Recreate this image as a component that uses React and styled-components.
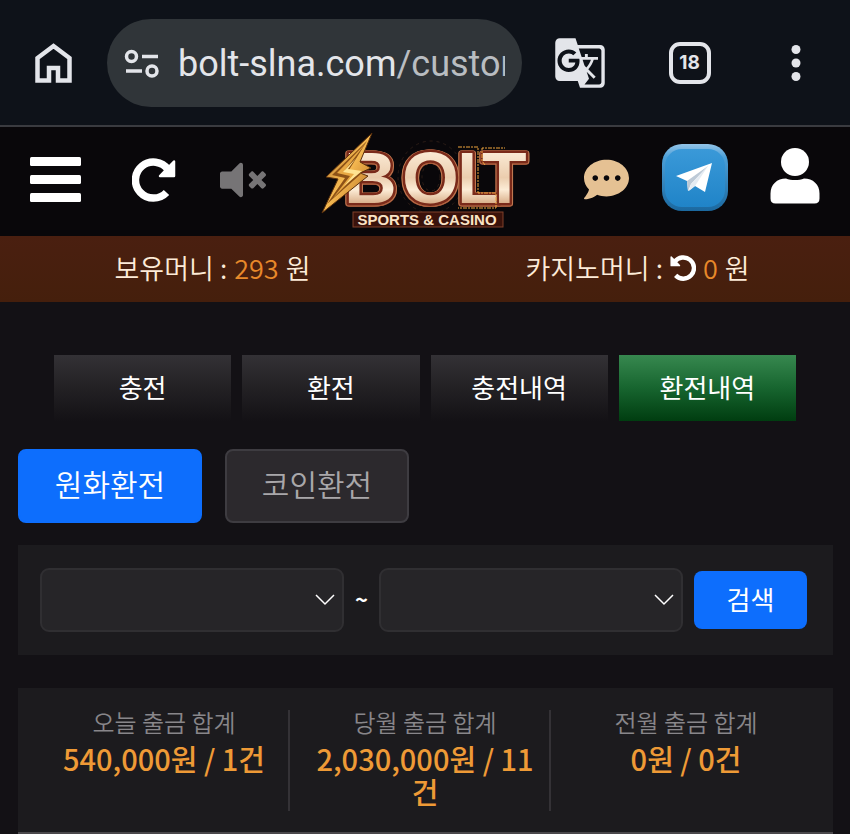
import React from 'react';
import styled, { createGlobalStyle } from 'styled-components';
import { FaCommentDots, FaVolumeMute } from 'react-icons/fa';
import { MdGTranslate } from 'react-icons/md';

const GlobalStyle = createGlobalStyle`
  *, *::before, *::after {
    box-sizing: border-box;
  }
  body {
    margin: 0;
    background: #131115;
    color: #fff;
    font-family: "Noto Sans CJK KR", "Noto Sans", sans-serif;
    font-weight: 350;
  }
  button, select {
    margin: 0;
    padding: 0;
    border: 0;
    font: inherit;
    color: inherit;
  }
  svg {
    display: block;
  }
`;

const S = {
  Page: styled.div`
    overflow: hidden;
  `,
  BrowserBar: styled.header`
    height: 127px;
    padding: 0 30px 0 32px;
    border-bottom: 2px solid #3a3b40;
    background: #0e1219;
    color: #e3e5ea;
    display: flex;
    align-items: center;
  `,
  AddressBar: styled.div`
    flex: 1;
    min-width: 0;
    height: 88px;
    margin: 0 31px 0 32px;
    padding: 2px 17px 0;
    border-radius: 44px;
    background: #303539;
    display: flex;
    align-items: center;
    gap: 17px;
  `,
  Url: styled.div`
    flex: 1;
    min-width: 0;
    overflow: hidden;
    white-space: nowrap;
    font-family: Roboto, sans-serif;
    font-size: 36px;
    font-weight: 400;
    line-height: 44px;
  `,
  UrlPath: styled.span`
    color: #b9bdc1;
  `,
  BrowserActions: styled.div`
    width: 267px;
    display: flex;
    align-items: center;
    justify-content: space-between;
  `,
  TabCount: styled.button`
    width: 42px;
    height: 42px;
    border: 4px solid #e3e5ea;
    border-radius: 11px;
    background: none;
    font-family: Inter, sans-serif;
    font-size: 19px;
    font-weight: 700;
    line-height: 24px;
  `,
  IconButton: styled.button`
    background: none;
    color: ${({ $color }) => $color || 'inherit'};
    display: flex;
    flex: none;
  `,
  SiteHeader: styled.header`
    height: 109px;
    padding: 0 30px 4px;
    background: #09070a;
    display: grid;
    grid-template-columns: 1fr 210px 1fr;
    align-items: center;
    column-gap: 54px;
  `,
  IconGroup: styled.div`
    display: grid;
    grid-template-columns: ${({ $columns }) => $columns};
    align-items: center;
  `,
  LogoLink: styled.a`
    display: block;
  `,
  MoneyBar: styled.div`
    height: 66px;
    background: linear-gradient(#4a1f10, #451f0c);
    color: #fdebd8;
    display: grid;
    grid-template-columns: 1fr 1fr;
  `,
  Money: styled.div`
    padding-bottom: 2px;
    font-size: 27px;
    line-height: 40px;
    display: flex;
    align-items: center;
    justify-content: center;
    gap: 7px;
  `,
  MoneyValue: styled.span`
    color: #e8892a;
  `,
  Main: styled.main`
    padding: 53px 17px 0 18px;
  `,
  Tabs: styled.nav`
    margin: 0 37px 0 36px;
    display: grid;
    grid-template-columns: repeat(4, 1fr);
    gap: 11px;
  `,
  Tab: styled.button`
    height: 66px;
    padding-bottom: 2px;
    background: ${({ $active }) => ($active
    ? 'linear-gradient(#37884f, #17652f 50%, #003d10)'
    : 'linear-gradient(#333135, #232124 50%, #131115)')};
    font-size: 26px;
    font-weight: 400;
    line-height: 38px;
  `,
  TypeButtons: styled.div`
    margin-top: 28px;
    display: flex;
    gap: 23px;
  `,
  TypeButton: styled.button`
    width: 184px;
    height: 74px;
    padding-bottom: 6px;
    border: 2px solid ${({ $active }) => ($active ? '#0d6efd' : '#3e3c41')};
    border-radius: 8px;
    background: ${({ $active }) => ($active ? '#0d6efd' : '#2c292d')};
    color: ${({ $active }) => ($active ? '#fff' : '#a9a7aa')};
    font-size: 30px;
    line-height: 44px;
  `,
  SearchForm: styled.form`
    height: 110px;
    margin-top: 22px;
    padding: 0 26px 0 22px;
    background: #1c1b1e;
    display: flex;
    align-items: center;
  `,
  SelectBox: styled.label`
    flex: 1;
    min-width: 0;
    display: grid;
    align-items: center;

    > * {
      grid-area: 1 / 1;
    }
    > svg {
      justify-self: end;
      margin-right: 9px;
      pointer-events: none;
    }
  `,
  Select: styled.select`
    appearance: none;
    width: 100%;
    height: 64px;
    padding: 0 44px 0 16px;
    border: 2px solid #302f32;
    border-radius: 9px;
    background: #262528;
    font-size: 26px;
  `,
  Tilde: styled.span`
    width: 35px;
    padding-bottom: 4px;
    font-size: 22px;
    font-weight: 700;
    line-height: 32px;
    text-align: center;
  `,
  SearchButton: styled.button`
    width: 113px;
    height: 58px;
    margin-left: 11px;
    padding-bottom: 2px;
    border-radius: 8px;
    background: #0d6efd;
    font-size: 26px;
    font-weight: 400;
    line-height: 38px;
  `,
  Summary: styled.section`
    margin-top: 33px;
    padding: 22px 21px 21px 11px;
    border-bottom: 2px solid #4a484b;
    background: #1c1b1e;
    display: grid;
    grid-template-columns: repeat(3, 1fr);
  `,
  SummaryItem: styled.dl`
    margin: 0;
    height: 101px;
    padding: 0 9px 0 20px;
    border-right: 2px solid #343236;
    text-align: center;

    &:last-child {
      border-right-color: transparent;
    }
  `,
  SummaryLabel: styled.dt`
    color: #88868a;
    font-size: 24px;
    line-height: 24px;
    margin-bottom: 8px;
  `,
  SummaryValue: styled.dd`
    margin: 0;
    color: #ee9a36;
    font-size: 29px;
    font-weight: 500;
    line-height: 33px;
  `,
};

const HomeIcon = () => (
  <svg width="43" height="44" viewBox="0 0 43 44" fill="none" stroke="currentColor" strokeWidth="4.5">
    <path d="M5.500 39.500V17L21.500 5l16 12v22.500H26V27h-9v12.500Z" />
  </svg>
);

const SiteSettingsIcon = () => (
  <svg width="37" height="30" viewBox="0 0 37 30" fill="none" stroke="currentColor" strokeWidth="3.5">
    <circle cx="7.500" cy="7.500" r="5" />
    <circle cx="28" cy="22" r="5" />
    <path d="M18 7.500h16M2 22h16" />
  </svg>
);

const MoreIcon = () => (
  <svg width="48" height="38" viewBox="0 0 48 38" fill="currentColor">
    <circle cx="24" cy="5.500" r="4.500" />
    <circle cx="24" cy="19" r="4.500" />
    <circle cx="24" cy="32.500" r="4.500" />
  </svg>
);

const MenuIcon = () => (
  <svg width="51" height="46" viewBox="0 0 51 46" fill="#fff">
    <rect width="51" height="9" rx="1.500" />
    <rect y="18" width="51" height="9" rx="1.500" />
    <rect y="36" width="51" height="9" rx="1.500" />
  </svg>
);

const ReloadIcon = ({ size, mirrored }) => (
  <svg width={size} height={size} viewBox="0 0 44 44">
    <g transform={mirrored ? 'translate(44 0) scale(-1 1)' : undefined}>
      <path d="M36 11.500A18 18 0 1 0 34.500 34.500" fill="none" stroke="#fff" strokeWidth="7.500" />
      <path
        d="M42 3.500V18H28Z"
        fill="#fff"
        stroke="#fff"
        strokeWidth="2.500"
        strokeLinejoin="round"
      />
    </g>
  </svg>
);

const UserIcon = () => (
  <svg width="50" height="66" viewBox="0 0 50 66" fill="#fff">
    <circle cx="25" cy="15" r="14" />
    <path d="M16 31.500c5 2 13 2 18 0 9 0 15.500 6 15.500 15v5q0 5-5 5h-39q-5 0-5-5v-5c0-9 6.500-15 15.500-15Z" />
  </svg>
);

const TelegramIcon = () => (
  <svg width="67" height="72" viewBox="0 0 67 72">
    <defs>
      <linearGradient id="tgEdge" x1="0" y1="0" x2="0" y2="1">
        <stop offset="0" stopColor="#93c4e8" />
        <stop offset="0.2" stopColor="#4b9fd8" />
        <stop offset="1" stopColor="#1b689f" />
      </linearGradient>
      <linearGradient id="tgFace" x1="0" y1="0" x2="0" y2="1">
        <stop offset="0" stopColor="#3a99d8" />
        <stop offset="1" stopColor="#2084c8" />
      </linearGradient>
    </defs>
    <rect width="66" height="67" rx="20" fill="url(#tgEdge)" />
    <rect x="3" y="5" width="60" height="58" rx="17" fill="url(#tgFace)" />
    <path d="M14 32 50 19 43 48 33 42 26 47 25 37Z" fill="#fff" />
    <path d="M25 37 46 22 29 40 26 47Z" fill="#bcc9d6" />
    <path d="M29 40 46 22 33 42 27 47Z" fill="#e4ebf2" />
  </svg>
);

const ChevronIcon = () => (
  <svg width="20" height="12" viewBox="0 0 20 12" fill="none" stroke="#fff" strokeWidth="1.500">
    <path d="m1 1 9 9 9-9" />
  </svg>
);

const LogoLetters = styled.text`
  font: 700 73px "Liberation Sans", sans-serif;
  paint-order: stroke;
  stroke: #7a2a1a;
  stroke-width: 5px;
  stroke-linejoin: round;
  filter: drop-shadow(1px 0 0 #c27a52) drop-shadow(-1px 0 0 #c27a52)
    drop-shadow(0 1px 0 #a85a3a);
`;

const Logo = () => (
  <svg width="210" height="98" viewBox="0 0 210 98" role="img" aria-label="BOLT Sports & Casino">
    <defs>
      <linearGradient id="letters" x1="0" y1="0" x2="0" y2="1">
        <stop offset="0.1" stopColor="#fff2df" />
        <stop offset="0.5" stopColor="#ebcdae" />
        <stop offset="0.65" stopColor="#fcecd6" />
        <stop offset="0.85" stopColor="#d3a47c" />
      </linearGradient>
      <linearGradient id="gold" x1="0" y1="0" x2="1" y2="1">
        <stop offset="0" stopColor="#9a5d1c" />
        <stop offset="0.5" stopColor="#f5b951" />
        <stop offset="1" stopColor="#a65c15" />
      </linearGradient>
    </defs>
    <g fill="none" stroke="#2c1d17" strokeDasharray="3 4">
      <ellipse cx="111" cy="46" rx="33" ry="36" />
      <ellipse cx="111" cy="46" rx="9" ry="14" />
    </g>
    <LogoLetters x="24 82 137 162" y="72" fill="url(#letters)">BOLT</LogoLetters>
    <path
      d="M138 16h20v46h18v15h-38M165 34l-3-4V17h23"
      fill="none"
      stroke="#efa53c"
      strokeWidth="1"
      strokeDasharray="4 1 2 1"
    />
    <path d="M52 2 6 46l12 2L2 82l46-37-8-3 11-5-11-6Z" fill="url(#gold)" stroke="#5a2f0c" strokeWidth="1" />
    <path d="M47 10 12 44l13 3L7 73l35-31-13-3Z" fill="#8d5217" />
    <path d="M46 12 17 42l13 3-17 22 25-25-13-3Z" fill="#e8a843" />
    <path d="M36 27 23 41l11 2-10 12 18-15-14-2Z" fill="#ffe391" />
    <rect x="33" y="81" width="150" height="15" fill="#3a120b" stroke="#80402a" />
    <text
      x="107"
      y="94"
      fill="#fae3c5"
      textAnchor="middle"
      fontFamily="Liberation Sans, sans-serif"
      fontSize="15"
      fontWeight="700"
    >
      SPORTS &amp; CASINO
    </text>
  </svg>
);

const tabs = ['충전', '환전', '충전내역', '환전내역'];
const types = ['원화환전', '코인환전'];
const totals = [
  { label: '오늘 출금 합계', value: '540,000원 / 1건' },
  { label: '당월 출금 합계', value: '2,030,000원 / 11건' },
  { label: '전월 출금 합계', value: '0원 / 0건' },
];

const DateSelect = ({ label }) => (
  <S.SelectBox>
    <S.Select aria-label={label} defaultValue="">
      <option value="" aria-label="-" />
    </S.Select>
    <ChevronIcon />
  </S.SelectBox>
);

const App = () => (
  <S.Page>
    <GlobalStyle />
    <S.BrowserBar>
      <S.IconButton aria-label="Home"><HomeIcon /></S.IconButton>
      <S.AddressBar>
        <SiteSettingsIcon />
        <S.Url>
          bolt-slna.com
          <S.UrlPath>/custom</S.UrlPath>
        </S.Url>
      </S.AddressBar>
      <S.BrowserActions>
        <S.IconButton aria-label="Translate"><MdGTranslate size={54} /></S.IconButton>
        <S.TabCount>18</S.TabCount>
        <S.IconButton aria-label="More"><MoreIcon /></S.IconButton>
      </S.BrowserActions>
    </S.BrowserBar>
    <S.SiteHeader>
      <S.IconGroup $columns="103fr 88fr 46fr">
        <S.IconButton aria-label="메뉴"><MenuIcon /></S.IconButton>
        <S.IconButton aria-label="새로고침"><ReloadIcon size={44} /></S.IconButton>
        <S.IconButton aria-label="음소거" $color="#767476"><FaVolumeMute size={46} /></S.IconButton>
      </S.IconGroup>
      <S.LogoLink href="#"><Logo /></S.LogoLink>
      <S.IconGroup $columns="78fr 108fr 49fr">
        <S.IconButton aria-label="채팅" $color="#e5c193"><FaCommentDots size={45} /></S.IconButton>
        <S.IconButton aria-label="텔레그램"><TelegramIcon /></S.IconButton>
        <S.IconButton aria-label="내 정보"><UserIcon /></S.IconButton>
      </S.IconGroup>
    </S.SiteHeader>
    <S.MoneyBar>
      <S.Money>
        <span>보유머니 :</span>
        <S.MoneyValue>293</S.MoneyValue>
        <span>원</span>
      </S.Money>
      <S.Money>
        <span>카지노머니 :</span>
        <S.IconButton aria-label="카지노머니 새로고침"><ReloadIcon size={26} mirrored /></S.IconButton>
        <S.MoneyValue>0</S.MoneyValue>
        <span>원</span>
      </S.Money>
    </S.MoneyBar>
    <S.Main>
      <S.Tabs>
        {tabs.map((tab) => (
          <S.Tab key={tab} $active={tab === '환전내역'}>{tab}</S.Tab>
        ))}
      </S.Tabs>
      <S.TypeButtons>
        {types.map((type) => (
          <S.TypeButton key={type} $active={type === '원화환전'}>{type}</S.TypeButton>
        ))}
      </S.TypeButtons>
      <S.SearchForm>
        <DateSelect label="시작일" />
        <S.Tilde>~</S.Tilde>
        <DateSelect label="종료일" />
        <S.SearchButton type="button">검색</S.SearchButton>
      </S.SearchForm>
      <S.Summary>
        {totals.map(({ label, value }) => (
          <S.SummaryItem key={label}>
            <S.SummaryLabel>{label}</S.SummaryLabel>
            <S.SummaryValue>{value}</S.SummaryValue>
          </S.SummaryItem>
        ))}
      </S.Summary>
    </S.Main>
  </S.Page>
);

export default App;
